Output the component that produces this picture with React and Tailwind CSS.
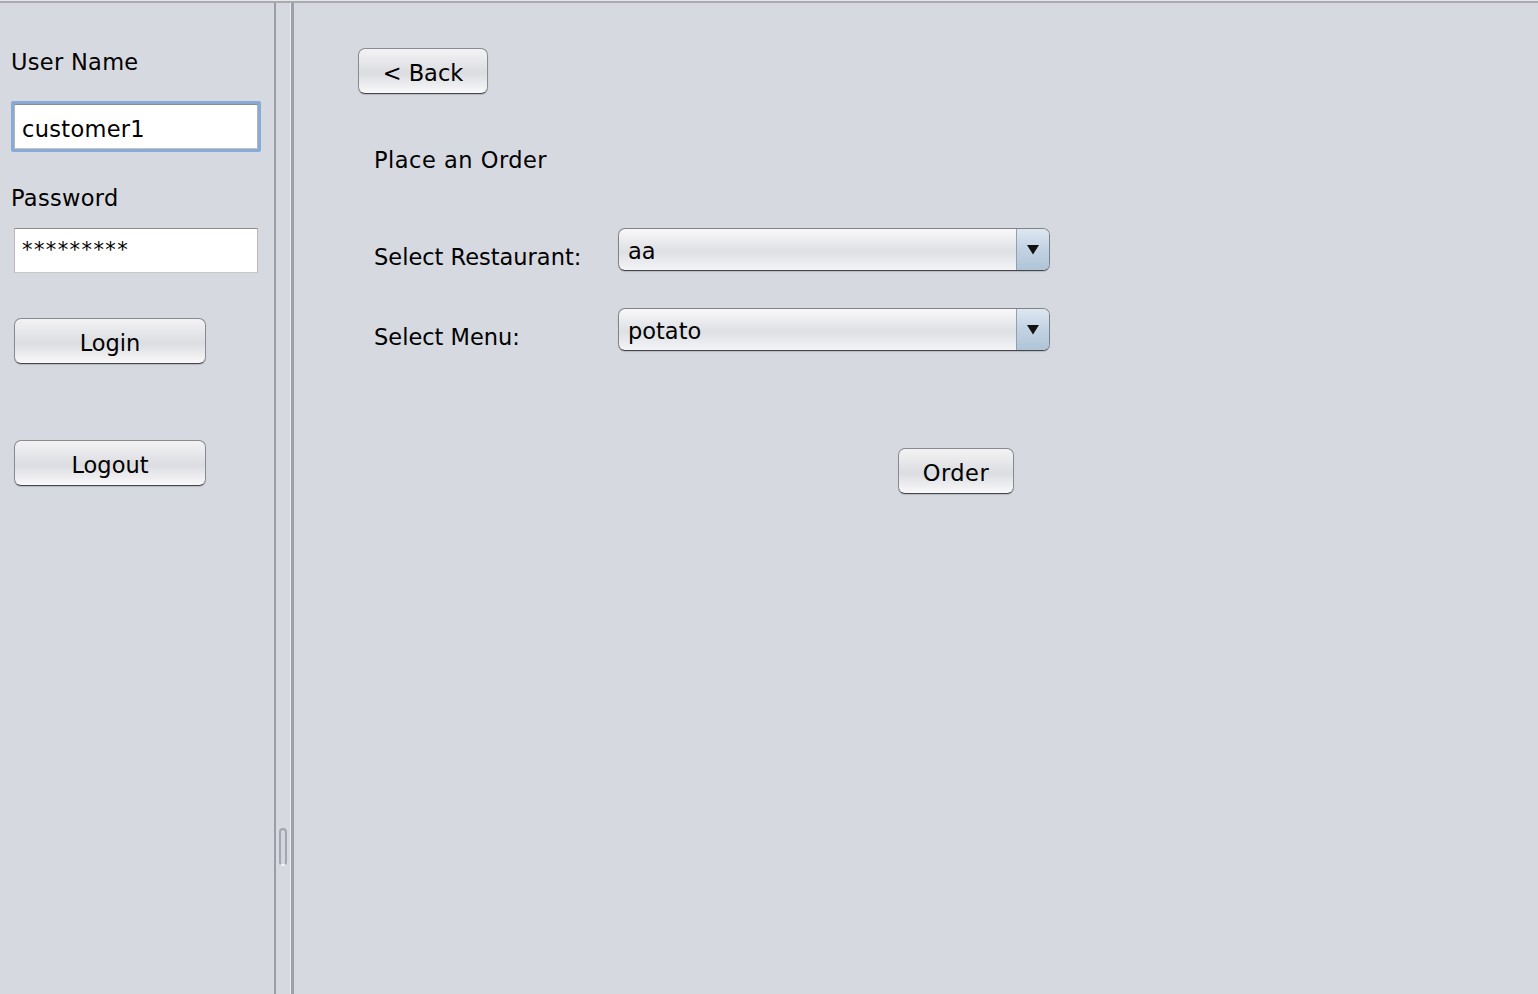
import React from "react";

function AquaButton({ children, className = "" }) {
  return (
    <div
      className={
        "flex items-center justify-center rounded-[7px] border border-[#8a8b90] border-b-[#46474c] bg-linear-to-b from-[#f3f3f5] via-[#dcdde1] via-55% to-[#f9f9fb] pt-[3px] shadow-[0_1px_1px_rgba(0,0,0,0.15)] text-[22.5px] leading-[26px] text-black " +
        className
      }
    >
      {children}
    </div>
  );
}

function Combo({ value }) {
  return (
    <div className="flex h-[43px] w-[432px] overflow-hidden rounded-[7px] border border-[#808287] border-b-[#46484e] bg-linear-to-b from-[#f8f8fa] via-[#dfe0e4] via-55% to-[#f3f4f6] shadow-[0_1px_1px_rgba(0,0,0,0.15)]">
      <div className="flex flex-1 items-center pl-[9px] pt-[2px] text-[22.5px] leading-[26px] text-black">
        {value}
      </div>
      <div className="flex w-[33px] items-center justify-center border-l border-[#8fa0b3] bg-linear-to-b from-[#dde7f1] via-[#c2d2e2] to-[#b0c4d8]">
        <svg width="12" height="10" viewBox="0 0 12 10">
          <polygon points="0,0 12,0 6,9.5" fill="#111" />
        </svg>
      </div>
    </div>
  );
}

export default function App() {
  return (
    <div className="flex h-[994px] w-[1538px] flex-col overflow-hidden bg-[#d6d9e0] font-['DejaVu_Sans',sans-serif] text-black">
      <div className="h-[1px] bg-[#e6e7ea]" />
      <div className="h-[2px] bg-[#a9abb1]" />
      <div className="flex flex-1">
        {/* Left panel */}
        <div className="flex w-[274px] flex-col pl-[11px]">
          <div className="mt-[46px] text-[22.5px] leading-[26px] tracking-[0.3px]">User Name</div>
          <div className="mt-[26px] h-[51px] w-[250px] rounded-[2px] border-[3px] border-[#87abd6] bg-[#87abd6]">
            <div className="flex h-full w-full items-start border border-t-[#8a8a8a] border-x-[#b5b5b5] border-b-[#c4c4c4] bg-white pl-[7px] pt-[11px] text-[22.5px] leading-[26px] tracking-[0.3px]">
              customer1
            </div>
          </div>
          <div className="mt-[33px] text-[22.5px] leading-[26px] tracking-[0.3px]">Password</div>
          <div className="ml-[3px] mt-[17px] flex h-[45px] w-[244px] items-start border border-t-[#8c8c8c] border-x-[#b8b8b8] border-b-[#c8c8c8] bg-white pl-[7px] pt-[9px] text-[21px] leading-[24px] tracking-[1.4px]">
            *********
          </div>
          <AquaButton className="ml-[3px] mt-[45px] h-[46px] w-[192px]">Login</AquaButton>
          <AquaButton className="ml-[3px] mt-[76px] h-[46px] w-[192px]">Logout</AquaButton>
        </div>

        {/* Divider */}
        <div className="flex w-[20px]">
          <div className="w-[2px] bg-[#9b9ea6]" />
          <div className="flex flex-1 justify-center">
            <div className="mt-[825px] h-[38px] w-[8px] rounded-full border-2 border-[#a3a6ae] border-b-[#eef0f3] bg-[#d3d6dd]" />
          </div>
          <div className="w-[1px] bg-[#eceef2]" />
          <div className="w-[3px] bg-[#9da0a8]" />
        </div>

        {/* Right panel */}
        <div className="flex flex-1 flex-col pl-[64px]">
          <AquaButton className="mt-[45px] h-[46px] w-[130px]">&lt; Back</AquaButton>
          <div className="ml-[16px] mt-[53px] text-[22.5px] leading-[26px] tracking-[0.5px]">Place an Order</div>
          <div className="ml-[16px] mt-[55px] flex">
            <div className="mt-[16px] w-[244px] text-[22.5px] leading-[26px]">Select Restaurant:</div>
            <Combo value="aa" />
          </div>
          <div className="ml-[16px] mt-[37px] flex">
            <div className="mt-[16px] w-[244px] text-[22.5px] leading-[26px]">Select Menu:</div>
            <Combo value="potato" />
          </div>
          <AquaButton className="ml-[540px] mt-[97px] h-[46px] w-[116px] tracking-[0.5px]">Order</AquaButton>
        </div>
      </div>
    </div>
  );
}
